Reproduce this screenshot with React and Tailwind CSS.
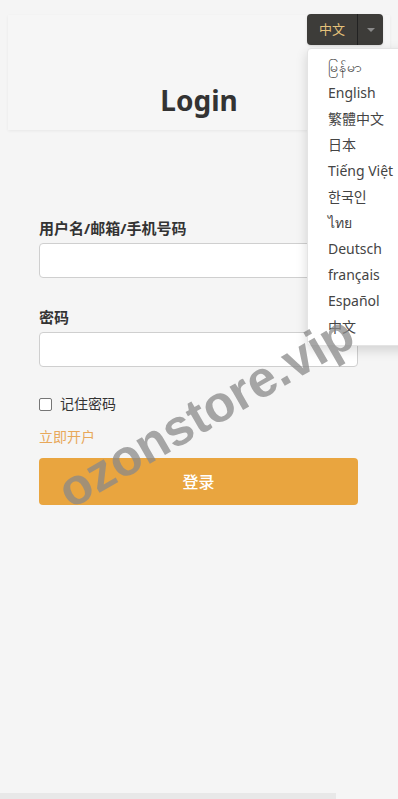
import React from 'react';

const langs = ['မြန်မာ', 'English', '繁體中文', '日本', 'Tiếng Việt', '한국인', 'ไทย', 'Deutsch', 'français', 'Español', '中文'];

const font = { fontFamily: '"Noto Sans", "Noto Sans CJK SC", sans-serif' };

export default function App() {
  return (
    <div className="relative min-h-[799px] w-[398px] overflow-hidden bg-[#f5f5f5] flex flex-col text-[#333]" style={font}>
      {/* header card */}
      <div className="mx-[8px] mt-[15px] h-[115px] bg-[#f6f6f6] shadow-[0_1px_3px_rgba(0,0,0,0.06)] flex items-end justify-center pb-[12px]">
        <h1 className="text-[28px] font-bold leading-[36px] text-[#333]">Login</h1>
      </div>

      {/* language switcher */}
      <div className="absolute right-[15px] top-[14px] flex h-[31px] w-[76px] rounded-[4px] bg-[#3d3c39] shadow-sm">
        <div className="flex w-[51px] items-center justify-center border-r border-[#222] text-[13px] text-[#e6c27b]">中文</div>
        <div className="flex flex-1 items-center justify-center">
          <div className="h-0 w-0 border-x-[4px] border-t-[4px] border-x-transparent border-t-[#8a8a8a]" />
        </div>
      </div>
      <div className="absolute left-[307px] top-[48px] z-10 w-[110px] rounded-[4px] border border-[#e4e4e4] bg-white py-[5px] shadow-[0_4px_12px_rgba(0,0,0,0.15)]">
        {langs.map((l) => (
          <div key={l} className="h-[26px] pl-[20px] text-[14px] leading-[26px] text-[#444]">{l}</div>
        ))}
      </div>

      {/* form */}
      <div className="mt-[88px] flex flex-col px-[39px] pr-[40px]">
        <label className="text-[15px] font-bold leading-[20px]">用户名/邮箱/手机号码</label>
        <input className="mt-[5px] h-[35px] w-full rounded-[4px] border border-[#cfcfcf] bg-white" />
        <label className="mt-[29px] text-[15px] font-bold leading-[20px]">密码</label>
        <input type="password" className="mt-[5px] h-[35px] w-full rounded-[4px] border border-[#cfcfcf] bg-white" />
        <div className="mt-[27px] flex items-center gap-[8px]">
          <div className="h-[13px] w-[13px] rounded-[2px] border border-[#767676] bg-white" />
          <span className="text-[14px] leading-[20px] text-[#333]">记住密码</span>
        </div>
        <span className="mt-[13px] text-[14px] leading-[20px] text-[#e8a85a]">立即开户</span>
        <button className="mt-[11px] h-[47px] w-full rounded-[4px] bg-[#e9a53f] text-[16px] font-medium text-white">登录</button>
      </div>

      <div className="flex-1" />
      <div className="h-[6px] w-[336px] bg-[#e8e8e8]" />

      {/* watermark */}
      <div
        className="pointer-events-none absolute left-[206px] top-[412px] z-20 -translate-x-1/2 -translate-y-1/2 -rotate-[30deg] whitespace-nowrap text-[51px] font-bold text-[#8a8a8a]/75"
        style={{ fontFamily: '"Liberation Sans", Arial, sans-serif' }}
      >
        ozonstore.vip
      </div>
    </div>
  );
}
